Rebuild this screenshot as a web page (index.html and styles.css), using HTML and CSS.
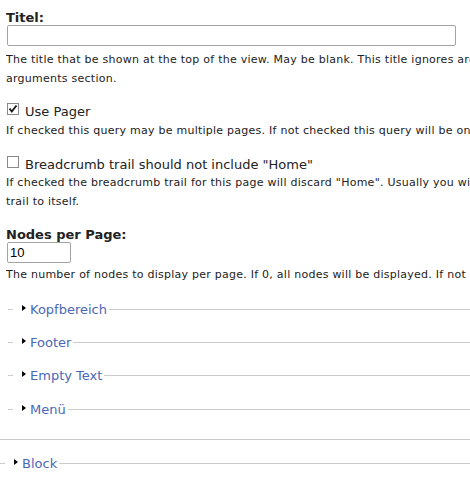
FILE: index.html
```html
<!DOCTYPE html>
<html>
<head>
<meta charset="utf-8">
<link rel="stylesheet" href="styles.css">
</head>
<body>
<div class="form">
  <div class="form-item item-title">
    <label class="field-label" for="titel">Titel:</label>
    <input class="text-input wide" id="titel" type="text">
    <div class="description">The title that be shown at the top of the view. May be blank. This title ignores arguments if the view is called with<br>arguments section.</div>
  </div>

  <div class="form-item item-check item-pager">
    <label class="check-label">
      <span class="cb"><svg width="12" height="12" viewBox="0 0 12 12"><rect x="0.5" y="0.5" width="11" height="11" fill="#fff" stroke="#8a8a8a"/><path d="M2.5 5.5 L4.8 8.5 L9.5 2.5" fill="none" stroke="#1a1a1a" stroke-width="1.9"/></svg></span>
      <span>Use Pager</span>
    </label>
    <div class="description">If checked this query may be multiple pages. If not checked this query will be one page.</div>
  </div>

  <div class="form-item item-check item-crumb">
    <label class="check-label">
      <span class="cb"><svg width="12" height="12" viewBox="0 0 12 12"><rect x="0.5" y="0.5" width="11" height="11" fill="#fff" stroke="#8a8a8a"/></svg></span>
      <span>Breadcrumb trail should not include "Home"</span>
    </label>
    <div class="description">If checked the breadcrumb trail for this page will discard "Home". Usually you will not need this, but this is a good idea for the breadcrumb<br>trail to itself.</div>
  </div>

  <div class="form-item item-nodes">
    <label class="field-label" for="nodes">Nodes per Page:</label>
    <input class="text-input narrow" id="nodes" type="text" value="10">
    <div class="description">The number of nodes to display per page. If 0, all nodes will be displayed. If not using a pager, this will be the maximum number of nodes in the list.</div>
  </div>

  <fieldset class="collapsed inner"><legend><a href="#" class="toggle">Kopfbereich</a></legend></fieldset>
  <fieldset class="collapsed inner"><legend><a href="#" class="toggle">Footer</a></legend></fieldset>
  <fieldset class="collapsed inner"><legend><a href="#" class="toggle">Empty Text</a></legend></fieldset>
  <fieldset class="collapsed inner last"><legend><a href="#" class="toggle">Menü</a></legend></fieldset>
</div>
<div class="divider"></div>
<fieldset class="collapsed outer"><legend><a href="#" class="toggle">Block</a></legend></fieldset>
</body>
</html>
```
FILE: styles.css
```css
html, body {
  margin: 0;
  padding: 0;
  background: #fff;
  overflow: hidden;
}
body {
  width: 470px;
  font-family: "DejaVu Sans", Verdana, sans-serif;
  color: #222;
}
.form {
  padding: 10px 0 0 6px;
}
.form-item {
  margin: 0;
}
.field-label {
  display: block;
  font-weight: bold;
  font-size: 13px;
  line-height: 16px;
  color: #222;
}
.text-input {
  display: block;
  box-sizing: border-box;
  height: 21px;
  margin: -1px 0 0 1px;
  padding: 1px 2px;
  border: 1px solid #a3a3a3;
  border-radius: 2px;
  font-family: "Liberation Sans", Arial, sans-serif;
  font-size: 13px;
  color: #000;
  background: #fff;
}
.text-input.wide { width: 449px; }
.text-input.narrow { width: 64px; }
.description {
  font-size: 11px;
  letter-spacing: 0.25px;
  line-height: 19px;
  margin-top: 4px;
  white-space: nowrap;
  overflow: hidden;
  width: 464px;
}
.item-title { margin-bottom: 16px; }
.check-label {
  display: flex;
  align-items: flex-start;
  gap: 6px;
  font-size: 13px;
  line-height: 16px;
  margin-left: 1px;
}
.cb { display: flex; width: 12px; height: 12px; margin-top: -1px; }
.item-check .description { margin-top: 1px; }
.item-pager { margin-bottom: 17px; }
.item-crumb .description { margin-top: 0; }
.item-crumb { margin-bottom: 16px; }
.item-nodes .description { margin-top: 2px; }
.item-nodes { margin-bottom: 17px; }

fieldset.collapsed {
  margin: 0;
  padding: 0 0 0 5px;
  border: none;
  border-top: 1px solid #ccc;
  min-width: 0;
}
fieldset.inner {
  margin-left: 2px;
  margin-bottom: 16px;
}
fieldset.inner.last {
  margin-top: 17px;
}
fieldset.inner:nth-of-type(3) {
  margin-bottom: 0;
}
legend {
  padding: 0 2px 0 0;
  font-size: 13px;
  line-height: 17px;
}
a.toggle {
  position: relative;
  display: inline-block;
  padding-left: 17px;
  color: #4a67b8;
  text-decoration: none;
}
a.toggle::before {
  content: "";
  position: absolute;
  left: 9px;
  top: 4px;
  border-left: 4px solid #000;
  border-top: 3.5px solid transparent;
  border-bottom: 3.5px solid transparent;
}
.divider {
  border-top: 1px solid #ccc;
  margin-top: 21px;
  margin-bottom: 15px;
}
fieldset.outer {
  margin-left: 0;
}
```
